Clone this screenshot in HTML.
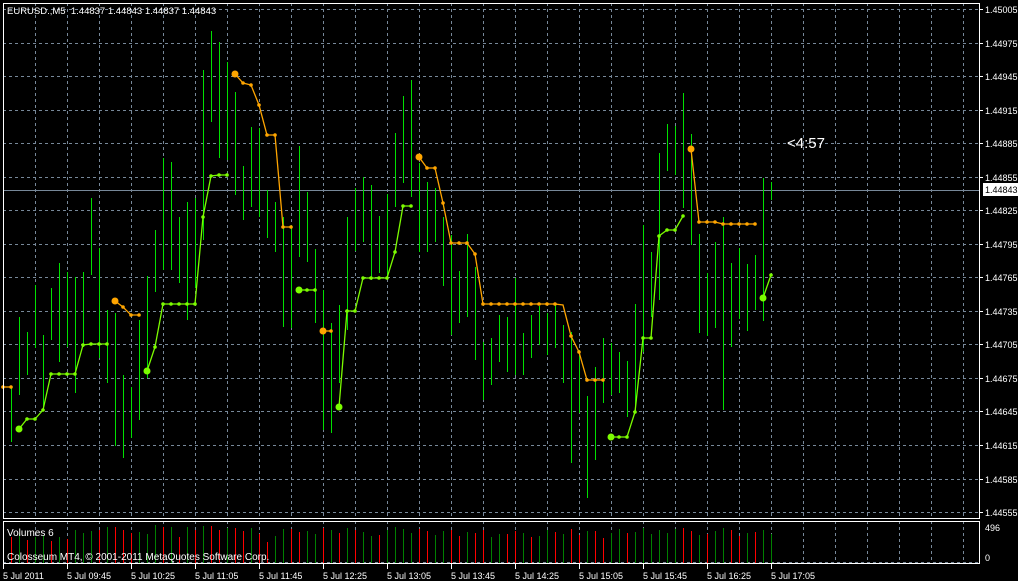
<!DOCTYPE html>
<html><head><meta charset="utf-8"><style>
html,body{margin:0;padding:0;background:#000;}
svg{display:block;}
text{font-family:"Liberation Sans",sans-serif;fill:#fff;}
</style></head><body>
<svg width="1018" height="581" viewBox="0 0 1018 581" xmlns="http://www.w3.org/2000/svg">
<rect width="1018" height="581" fill="#000"/>
<g stroke="#778899" stroke-width="1" stroke-dasharray="3,3" shape-rendering="crispEdges">
<path d="M3 9.5H979M3 43.5H979M3 76.5H979M3 110.5H979M3 143.5H979M3 177.5H979M3 210.5H979M3 244.5H979M3 277.5H979M3 311.5H979M3 344.5H979M3 378.5H979M3 411.5H979M3 445.5H979M3 479.5H979M3 512.5H979"/>
<path d="M35.5 3V519M67.5 3V519M99.5 3V519M131.5 3V519M163.5 3V519M195.5 3V519M227.5 3V519M259.5 3V519M291.5 3V519M323.5 3V519M355.5 3V519M387.5 3V519M419.5 3V519M451.5 3V519M483.5 3V519M515.5 3V519M547.5 3V519M579.5 3V519M611.5 3V519M643.5 3V519M675.5 3V519M707.5 3V519M739.5 3V519M771.5 3V519M803.5 3V519M835.5 3V519M867.5 3V519M899.5 3V519M931.5 3V519M963.5 3V519"/>
<path d="M35.5 521V564M67.5 521V564M99.5 521V564M131.5 521V564M163.5 521V564M195.5 521V564M227.5 521V564M259.5 521V564M291.5 521V564M323.5 521V564M355.5 521V564M387.5 521V564M419.5 521V564M451.5 521V564M483.5 521V564M515.5 521V564M547.5 521V564M579.5 521V564M611.5 521V564M643.5 521V564M675.5 521V564M707.5 521V564M739.5 521V564M771.5 521V564M803.5 521V564M835.5 521V564M867.5 521V564M899.5 521V564M931.5 521V564M963.5 521V564M3 562.5H979"/>
</g>
<path d="M3 190.5H979" stroke="#778899" shape-rendering="crispEdges"/>
<g transform="translate(0.5,0)" stroke="#00e000" stroke-width="1" shape-rendering="crispEdges" fill="none">
<path d="M3 400V472M11 387V442M19 317V395M27 332V375M35 285V348M43 335V410M51 288V340M59 263V362M67 272V347M75 277V393M83 272V347M91 198V275M99 248V358M107 310V383M115 313V446M123 375V458M131 387V438M139 320V420M147 276V378M155 230V292M163 158V270M171 162V270M179 217V283M187 202V320M195 198V288M203 70V240M211 31V122M219 42V158M227 62V160M235 92V195M243 166V220M251 127V207M259 128V217M267 190V238M275 202V252M283 217V327M291 225V328M299 146V257M307 192V262M315 249V323M323 290V430M331 323V433M339 305V383M347 217V330M355 188V251M363 177V242M371 185V280M379 216V273M387 194V278M395 133V207M403 96V183M411 80V197M419 163V252M427 182V252M435 188V242M443 217V286M451 235V335M459 271V323M467 234V317M475 267V360M483 342V400M491 338V385M499 315V362M507 317V372M515 278V375M523 333V375M531 315V358M539 306V345M547 313V355M555 305V348M563 325V383M571 332V463M579 350V413M587 396V498M595 367V460M603 338V403M611 343V395M619 352V393M627 361V417M635 304V413M643 225V352M651 252V317M659 153V300M667 124V171M675 126V175M683 93V208M691 134V245M699 234V333M707 273V336M715 242V328M723 217V410M731 263V347M739 248V319M747 264V331M755 255V310M763 178V321M771 182V200"/>
</g>
<g fill="none" stroke-width="1.3">
<polyline stroke="#ffa500" points="3,387 11,387"/>
<polyline stroke="#7cfc00" points="19,429 27,419 35,419 43,410 51,374 59,374 67,374 75,374 83,345 91,344 99,344 107,344"/>
<polyline stroke="#ffa500" points="115,301 123,307 131,315 139,315"/>
<polyline stroke="#7cfc00" points="147,371 155,347 163,304 171,304 179,304 187,304 195,304 203,217 211,176 219,175 227,175"/>
<polyline stroke="#ffa500" points="235,74 243,83 251,85 259,105 267,135 275,135 283,227 291,227"/>
<polyline stroke="#7cfc00" points="299,290 307,290 315,290"/>
<polyline stroke="#ffa500" points="323,331 331,331"/>
<polyline stroke="#7cfc00" points="339,407 347,311 355,311 363,278 371,278 379,278 387,278 395,252 403,206 411,206"/>
<polyline stroke="#ffa500" points="419,157 427,168 435,168 443,203 451,243 459,243 467,243 475,254 483,304 491,304 499,304 507,304 515,304 523,304 531,304 539,304 547,304 555,304 563,305 571,336 579,352 587,380 595,380 603,380"/>
<polyline stroke="#7cfc00" points="611,437 619,437 627,437 635,412 643,338 651,338 659,236 667,230 675,230 683,216"/>
<polyline stroke="#ffa500" points="691,149 699,222 707,222 715,222 723,224 731,224 739,224 747,224 755,224"/>
<polyline stroke="#7cfc00" points="763,298 771,275"/>
</g>
<g fill="#ffa500">
<circle cx="3" cy="387" r="1.8"/><circle cx="11" cy="387" r="1.8"/>
<circle cx="115" cy="301" r="3.5"/><circle cx="123" cy="307" r="1.8"/><circle cx="131" cy="315" r="1.8"/><circle cx="139" cy="315" r="1.8"/>
<circle cx="235" cy="74" r="3.5"/><circle cx="243" cy="83" r="1.8"/><circle cx="251" cy="85" r="1.8"/><circle cx="259" cy="105" r="1.8"/><circle cx="267" cy="135" r="1.8"/><circle cx="275" cy="135" r="1.8"/><circle cx="283" cy="227" r="1.8"/><circle cx="291" cy="227" r="1.8"/>
<circle cx="323" cy="331" r="3.5"/><circle cx="331" cy="331" r="1.8"/>
<circle cx="419" cy="157" r="3.5"/><circle cx="427" cy="168" r="1.8"/><circle cx="435" cy="168" r="1.8"/><circle cx="443" cy="203" r="1.8"/><circle cx="451" cy="243" r="1.8"/><circle cx="459" cy="243" r="1.8"/><circle cx="467" cy="243" r="1.8"/><circle cx="475" cy="254" r="1.8"/><circle cx="483" cy="304" r="1.8"/><circle cx="491" cy="304" r="1.8"/><circle cx="499" cy="304" r="1.8"/><circle cx="507" cy="304" r="1.8"/><circle cx="515" cy="304" r="1.8"/><circle cx="523" cy="304" r="1.8"/><circle cx="531" cy="304" r="1.8"/><circle cx="539" cy="304" r="1.8"/><circle cx="547" cy="304" r="1.8"/><circle cx="555" cy="304" r="1.8"/><circle cx="571" cy="336" r="1.8"/><circle cx="579" cy="352" r="1.8"/><circle cx="587" cy="380" r="1.8"/><circle cx="595" cy="380" r="1.8"/><circle cx="603" cy="380" r="1.8"/>
<circle cx="691" cy="149" r="3.5"/><circle cx="699" cy="222" r="1.8"/><circle cx="707" cy="222" r="1.8"/><circle cx="715" cy="222" r="1.8"/><circle cx="723" cy="224" r="1.8"/><circle cx="731" cy="224" r="1.8"/><circle cx="739" cy="224" r="1.8"/><circle cx="747" cy="224" r="1.8"/><circle cx="755" cy="224" r="1.8"/>
</g>
<g fill="#7cfc00">
<circle cx="19" cy="429" r="3.5"/><circle cx="27" cy="419" r="1.8"/><circle cx="35" cy="419" r="1.8"/><circle cx="43" cy="410" r="1.8"/><circle cx="51" cy="374" r="1.8"/><circle cx="59" cy="374" r="1.8"/><circle cx="67" cy="374" r="1.8"/><circle cx="75" cy="374" r="1.8"/><circle cx="83" cy="345" r="1.8"/><circle cx="91" cy="344" r="1.8"/><circle cx="99" cy="344" r="1.8"/><circle cx="107" cy="344" r="1.8"/>
<circle cx="147" cy="371" r="3.5"/><circle cx="155" cy="347" r="1.8"/><circle cx="163" cy="304" r="1.8"/><circle cx="171" cy="304" r="1.8"/><circle cx="179" cy="304" r="1.8"/><circle cx="187" cy="304" r="1.8"/><circle cx="195" cy="304" r="1.8"/><circle cx="203" cy="217" r="1.8"/><circle cx="211" cy="176" r="1.8"/><circle cx="219" cy="175" r="1.8"/><circle cx="227" cy="175" r="1.8"/>
<circle cx="299" cy="290" r="3.5"/><circle cx="307" cy="290" r="1.8"/><circle cx="315" cy="290" r="1.8"/>
<circle cx="339" cy="407" r="3.5"/><circle cx="347" cy="311" r="1.8"/><circle cx="355" cy="311" r="1.8"/><circle cx="363" cy="278" r="1.8"/><circle cx="371" cy="278" r="1.8"/><circle cx="379" cy="278" r="1.8"/><circle cx="387" cy="278" r="1.8"/><circle cx="395" cy="252" r="1.8"/><circle cx="403" cy="206" r="1.8"/><circle cx="411" cy="206" r="1.8"/>
<circle cx="611" cy="437" r="3.5"/><circle cx="619" cy="437" r="1.8"/><circle cx="627" cy="437" r="1.8"/><circle cx="635" cy="412" r="1.8"/><circle cx="643" cy="338" r="1.8"/><circle cx="651" cy="338" r="1.8"/><circle cx="659" cy="236" r="1.8"/><circle cx="667" cy="230" r="1.8"/><circle cx="675" cy="230" r="1.8"/><circle cx="683" cy="216" r="1.8"/>
<circle cx="763" cy="298" r="3.5"/><circle cx="771" cy="275" r="1.8"/>
</g>
<g transform="translate(0.5,0)" stroke-width="1" shape-rendering="crispEdges">
<path stroke="#ff0000" d="M3 532V563M11 537V563M27 540V563M51 541V563M67 539V563M99 530V563M115 527V563M123 530V563M131 533V563M163 527V563M179 537V563M195 530V563M211 526V563M219 530V563M235 528V563M243 531V563M259 534V563M267 542V563M291 529V563M299 532V563M323 528V563M339 533V563M355 530V563M379 535V563M419 529V563M427 531V563M451 530V563M459 536V563M475 533V563M483 530V563M507 534V563M515 531V563M531 537V563M555 532V563M571 529V563M579 535V563M595 531V563M603 538V563M627 533V563M683 528V563M691 531V563M707 534V563M731 530V563M739 536V563M755 532V563"/>
<path stroke="#008000" d="M19 533V563M35 537V563M43 535V563M59 537V563M75 530V563M83 533V563M91 531V563M107 527V563M139 532V563M147 534V563M155 525V563M171 527V563M187 527V563M203 526V563M227 528V563M251 528V563M275 536V563M283 529V563M307 531V563M315 534V563M331 530V563M347 528V563M363 532V563M371 536V563M387 530V563M395 527V563M403 529V563M411 533V563M435 535V563M443 531V563M467 532V563M491 537V563M499 534V563M523 533V563M539 536V563M547 530V563M563 534V563M587 531V563M611 533V563M619 529V563M635 532V563M643 528V563M651 534V563M659 530V563M667 533V563M675 529V563M699 535V563M715 531V563M723 528V563M747 533V563M763 530V563M771 534V563"/>
</g>
<g fill="none" stroke="#fff" stroke-width="1" shape-rendering="crispEdges">
<rect x="3.5" y="3.5" width="976" height="515"/>
<rect x="3.5" y="521.5" width="976" height="42"/>
<path d="M979 9.5H983M979 43.5H983M979 76.5H983M979 110.5H983M979 143.5H983M979 177.5H983M979 210.5H983M979 244.5H983M979 277.5H983M979 311.5H983M979 344.5H983M979 378.5H983M979 411.5H983M979 445.5H983M979 479.5H983M979 512.5H983"/>
<path d="M3.5 564V569M67.5 564V569M131.5 564V569M195.5 564V569M259.5 564V569M323.5 564V569M387.5 564V569M451.5 564V569M515.5 564V569M579.5 564V569M643.5 564V569M707.5 564V569M771.5 564V569"/>
</g>
<text x="7" y="14" font-size="9.5">EURUSD.,M5&#160;&#160;1.44837 1.44843 1.44837 1.44843</text>
<text x="787" y="148" font-size="15">&lt;4:57</text>
<g font-size="9">
<text x="985" y="13">1.45005</text>
<text x="985" y="47">1.44975</text>
<text x="985" y="80">1.44945</text>
<text x="985" y="114">1.44915</text>
<text x="985" y="147">1.44885</text>
<text x="985" y="181">1.44855</text>
<text x="985" y="214">1.44825</text>
<text x="985" y="248">1.44795</text>
<text x="985" y="281">1.44765</text>
<text x="985" y="315">1.44735</text>
<text x="985" y="348">1.44705</text>
<text x="985" y="382">1.44675</text>
<text x="985" y="415">1.44645</text>
<text x="985" y="449">1.44615</text>
<text x="985" y="483">1.44585</text>
<text x="985" y="516">1.44555</text>
</g>
<rect x="983" y="183" width="35" height="13" fill="#fff"/>
<text x="985" y="193" font-size="9" style="fill:#000">1.44843</text>
<text x="985" y="531" font-size="9">496</text>
<text x="985" y="561" font-size="9">0</text>
<text x="7" y="536" font-size="10">Volumes 6</text>
<text x="7" y="560" font-size="10">Colosseum MT4, © 2001-2011 MetaQuotes Software Corp.</text>
<g font-size="9">
<text x="3" y="579">5 Jul 2011</text>
<text x="67" y="579">5 Jul 09:45</text>
<text x="131" y="579">5 Jul 10:25</text>
<text x="195" y="579">5 Jul 11:05</text>
<text x="259" y="579">5 Jul 11:45</text>
<text x="323" y="579">5 Jul 12:25</text>
<text x="387" y="579">5 Jul 13:05</text>
<text x="451" y="579">5 Jul 13:45</text>
<text x="515" y="579">5 Jul 14:25</text>
<text x="579" y="579">5 Jul 15:05</text>
<text x="643" y="579">5 Jul 15:45</text>
<text x="707" y="579">5 Jul 16:25</text>
<text x="771" y="579">5 Jul 17:05</text>
</g>
</svg>
</body></html>
